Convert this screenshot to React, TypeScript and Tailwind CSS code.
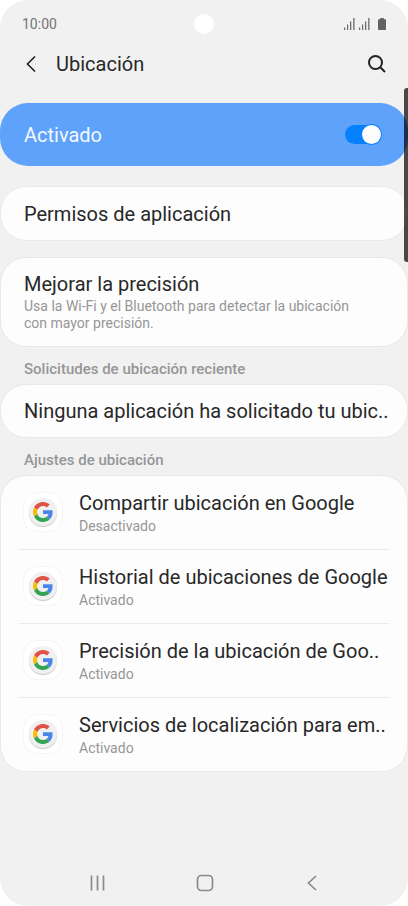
import { useState } from "react";

const googleSettings = [
  { title: "Compartir ubicación en Google", status: "Desactivado" },
  { title: "Historial de ubicaciones de Google", status: "Activado" },
  { title: "Precisión de la ubicación de Goo..", status: "Activado" },
  { title: "Servicios de localización para em..", status: "Activado" },
];

const card = "w-full rounded-[26px] border border-[#e8e8e8] bg-[#fdfdfd]";

function SignalIcon() {
  return (
    <svg width="11" height="12" viewBox="0 0 11 12" fill="#6a6a6a" aria-hidden="true">
      <rect x="0" y="9.5" width="1.2" height="2.5" />
      <rect x="3" y="6.5" width="1.2" height="5.5" />
      <rect x="6" y="3.5" width="1.3" height="8.5" />
      <rect x="9.2" y="0" width="1.3" height="12" />
    </svg>
  );
}

function BatteryIcon() {
  return (
    <svg width="8" height="12" viewBox="0 0 8 12" fill="#626262" aria-hidden="true">
      <path d="M2.2 0h3.6v1.3H7.2a.8.8 0 0 1 .8.8v9.1a.8.8 0 0 1-.8.8H.8a.8.8 0 0 1-.8-.8V2.100a.8.8 0 0 1 .8-.8h1.400z" />
    </svg>
  );
}

function GoogleIcon() {
  return (
    <span className="flex size-10 shrink-0 items-center justify-center rounded-[14px] border border-[#f6f6f6] bg-white">
      <span className="flex size-7 items-center justify-center rounded-full bg-[#f0f0f0] shadow-[0_1px_1px_#c8c8c8]">
        <svg width="20" height="20" viewBox="0 0 48 48" aria-hidden="true">
          <path fill="#e05246" d="M24 9.500c3.540 0 6.710 1.220 9.210 3.600l6.850-6.850C35.900 2.380 30.470 0 24 0 14.620 0 6.510 5.380 2.560 13.220l7.980 6.190C12.430 13.720 17.740 9.500 24 9.500z" />
          <path fill="#4a86e8" d="M46.980 24.550c0-1.570-.150-3.090-.380-4.550H24v9.020h12.940c-.580 2.960-2.260 5.480-4.780 7.180l7.730 6c4.510-4.180 7.090-10.360 7.090-17.650z" />
          <path fill="#fbbc05" d="M10.530 28.590c-.480-1.450-.760-2.990-.760-4.590s.270-3.140.760-4.590l-7.980-6.190C.920 16.460 0 20.120 0 24c0 3.880.920 7.540 2.560 10.780l7.970-6.190z" />
          <path fill="#34a353" d="M24 48c6.480 0 11.930-2.130 15.890-5.810l-7.730-6c-2.150 1.450-4.920 2.300-8.160 2.300-6.260 0-11.570-4.220-13.470-9.910l-7.980 6.190C6.510 42.620 14.620 48 24 48z" />
        </svg>
      </span>
    </span>
  );
}

export default function App() {
  const [enabled, setEnabled] = useState(true);

  return (
    <div className="relative flex min-h-screen flex-col overflow-hidden rounded-[28px] bg-[#f1f1f1] font-['Roboto',sans-serif] text-[#282828]">
      <div className="grid h-12 grid-cols-3 items-center px-[22px]">
        <span className="text-sm text-[#747474]">10:00</span>
        <span className="size-5 justify-self-center rounded-full bg-white" />
        <span className="flex items-center gap-1 justify-self-end">
          <SignalIcon />
          <SignalIcon />
          <span className="ml-1 flex">
            <BatteryIcon />
          </span>
        </span>
      </div>

      <header className="flex h-[31px] items-center pr-[22px] pl-6">
        <button type="button" aria-label="Atrás" className="flex w-8 shrink-0">
          <svg width="14" height="18" viewBox="0 0 14 18" fill="none" stroke="#262626" strokeWidth="1.700" aria-hidden="true">
            <path d="M11 1.500L3.500 9l7.500 7.500" />
          </svg>
        </button>
        <h1 className="flex-1 text-xl">Ubicación</h1>
        <button type="button" aria-label="Buscar" className="flex">
          <svg width="18" height="18" viewBox="0 0 18 18" fill="none" stroke="#222" strokeWidth="2" aria-hidden="true">
            <circle cx="7.500" cy="7.500" r="6.500" />
            <path d="M12 12l5 5" />
          </svg>
        </button>
      </header>

      <main className="flex-1">
        <label className="mt-6 flex h-[63px] items-center justify-between rounded-[28px] bg-[#5ea2fb] pr-[27px] pl-6 text-xl text-[#f3f8ff]">
          Activado
          <input
            type="checkbox"
            role="switch"
            checked={enabled}
            onChange={(e) => setEnabled(e.target.checked)}
            className="flex h-[19px] w-9 appearance-none items-center rounded-full bg-[#8f9aa8] before:size-[19px] before:rounded-full before:bg-[#fcfcfc] checked:justify-end checked:bg-[#0581ff] checked:before:shadow-[0_0_0_1px_#0581ff]"
          />
        </label>

        <button type="button" className={`${card} mt-5 block h-[55px] px-[23px] text-left text-xl`}>
          Permisos de aplicación
        </button>

        <button type="button" className={`${card} mt-4 block pt-3 pr-10 pb-[14px] pl-[23px] text-left`}>
          <span className="block text-xl">Mejorar la precisión</span>
          <span className="block text-sm leading-[17px] text-[#969696]">
            Usa la Wi-Fi y el Bluetooth para detectar la ubicación con mayor precisión.
          </span>
        </button>

        <h2 className="flex h-[37px] items-center px-6 pt-2 text-[15px] font-medium text-[#969696]">
          Solicitudes de ubicación reciente
        </h2>
        <div className={`${card} flex h-[54px] items-center px-[23px] text-xl`}>
          <span className="whitespace-nowrap">Ninguna aplicación ha solicitado tu ubic..</span>
        </div>

        <h2 className="flex h-[37px] items-center px-6 pt-2 text-[15px] font-medium text-[#969696]">
          Ajustes de ubicación
        </h2>
        <ul className={`${card} px-[18px]`}>
          {googleSettings.map((item) => (
            <li key={item.title} className="border-b border-[#e9e9e9] last:border-b-0">
              <button type="button" className="flex h-[73px] w-full items-center gap-4 px-1 pb-[2px] text-left">
                <GoogleIcon />
                <span className="whitespace-nowrap">
                  <span className="block text-xl">{item.title}</span>
                  <span className="block text-sm leading-[18px] text-[#969696]">{item.status}</span>
                </span>
              </button>
            </li>
          ))}
        </ul>
      </main>

      <nav className="flex h-[46px] items-center justify-center gap-[89px] pl-[2px]">
        <button type="button" aria-label="Recientes" className="flex">
          <svg width="18" height="18" viewBox="0 0 18 18" stroke="#8b8b8b" strokeWidth="1.700" aria-hidden="true">
            <path d="M2.500 1.500v15M8.500 1.500v15M14.500 1.500v15" />
          </svg>
        </button>
        <button type="button" aria-label="Inicio" className="flex">
          <svg width="18" height="18" viewBox="0 0 18 18" fill="none" stroke="#8b8b8b" strokeWidth="1.700" aria-hidden="true">
            <rect x="1.500" y="1.500" width="15" height="15" rx="4" />
          </svg>
        </button>
        <button type="button" aria-label="Volver" className="flex">
          <svg width="18" height="18" viewBox="0 0 18 18" fill="none" stroke="#8b8b8b" strokeWidth="1.700" aria-hidden="true">
            <path d="M13 2L5.500 9l7.500 7" />
          </svg>
        </button>
      </nav>

      <div className="absolute top-[88px] right-0 h-[174px] w-1 rounded-l-[3px] bg-black/70" />
    </div>
  );
}
